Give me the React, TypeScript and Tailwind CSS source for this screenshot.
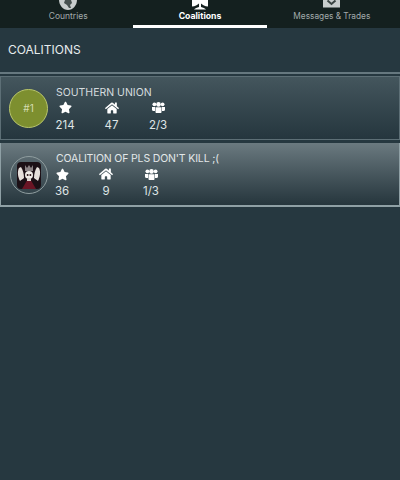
import { FaStar, FaHome } from "react-icons/fa";

const font = { fontFamily: '"Inter", "Open Sans", sans-serif' };

// top of the tab icons runs off the screen, so only the visible part is drawn
function GlobeTop() {
  return (
    <svg width="18" height="10" viewBox="0 0 18 10" className="block">
      <path d="M0 0h18c0 5-4 10-9 10S0 5 0 0z" fill="#c8cdcd" />
      <path d="M6 0h6l1 3-2 2 1 3-2 0-2-3-3-2z" fill="#46504f" />
    </svg>
  );
}

function CrestTop() {
  return (
    <svg width="16" height="10" viewBox="0 0 16 10" className="block">
      <path
        d="M0 0H16V6.500C13 6.500 10.500 5 9 3.500V7C11 7.500 13 8.200 14 9.500H2C3 8.200 5 7.500 7 7V3.500C5.500 5 3 6.500 0 6.500Z"
        fill="#ffffff"
      />
    </svg>
  );
}

function EnvelopeTop() {
  return (
    <svg width="17" height="8" viewBox="0 0 17 8" className="block">
      <rect width="17" height="7.500" fill="#c8cdcd" />
      <path d="M4.500 0.500 8.500 4 12.500 0.500" fill="none" stroke="#3a4443" strokeWidth="2" />
    </svg>
  );
}

function UsersIcon() {
  return (
    <svg width="13" height="11" viewBox="0 0 13 11" fill="#ffffff">
      <circle cx="2.400" cy="2.300" r="1.900" />
      <circle cx="10.600" cy="2.300" r="1.900" />
      <circle cx="6.500" cy="2.400" r="2.300" />
      <path d="M0 5h3v4H1.200C.5 9 0 8.500 0 7.800z" />
      <path d="M13 5h-3v4h1.800c.7 0 1.200-.5 1.200-1.200z" />
      <path d="M3.500 5.200h6V10c0 .6-.4 1-1 1h-4c-.6 0-1-.4-1-1z" />
    </svg>
  );
}

function SkullBadge() {
  return (
    <div className="flex h-[38px] w-[38px] items-center justify-center rounded-full border-[1.5px] border-[#8f9d9f]">
      <svg width="24" height="27" viewBox="0 0 24 27" className="rounded-[4px]">
        <rect width="24" height="27" fill="#1c1016" />
        <path d="M5 27 L12 15 L19 27 Z" fill="#6a1525" />
        <path d="M2 6C0 10 1 15 3 19c1-1 3-2 4-3 0-4-1-8-3-11z" fill="#e6dfdb" />
        <path d="M22 6c2 4 1 9-1 13-1-1-3-2-4-3 0-4 1-8 3-11z" fill="#e6dfdb" />
        <path d="M8 3l2 3 2-3 2 3 2-3v6H8z" fill="#8b8285" />
        <circle cx="12" cy="13" r="4" fill="#efeae6" />
        <rect x="10" y="16" width="4" height="3" fill="#d8d0cc" />
        <circle cx="10.600" cy="13" r="1" fill="#2a1015" />
        <circle cx="13.400" cy="13" r="1" fill="#2a1015" />
      </svg>
    </div>
  );
}

function Stat({ icon, value, width }: { icon: React.ReactNode; value: string; width: string }) {
  return (
    <div className={`flex flex-col items-center ${width}`}>
      <div className="flex h-[14px] items-center text-white">{icon}</div>
      <div className="mt-[3px] text-[11.5px] leading-[14px] text-[#dfe5e6]">{value}</div>
    </div>
  );
}

export default function App() {
  return (
    <div style={font} className="flex h-[480px] w-[400px] flex-col overflow-hidden bg-[#263840]">
      <nav className="grid h-[28px] shrink-0 grid-cols-3 bg-[#14201f]">
        <div className="flex h-[28px] flex-col items-center pl-[3px]">
          <GlobeTop />
          <div className="mt-[1px] text-[8.5px] leading-[11px] text-[#a3abac]">Countries</div>
        </div>
        <div className="flex h-[28px] flex-col items-center border-b-[3px] border-white">
          <CrestTop />
          <div className="mt-[1px] text-[8.7px] font-bold leading-[11px] text-white">Coalitions</div>
        </div>
        <div className="flex h-[28px] flex-col items-center pr-[3px]">
          <EnvelopeTop />
          <div className="mt-[3px] text-[8.300px] leading-[11px] text-[#a3abac]">Messages &amp; Trades</div>
        </div>
      </nav>

      <header className="flex h-[46px] shrink-0 items-center border-b-[2px] border-[#66787f] pl-[8px] text-[12px] text-[#e6ecee]">
        COALITIONS
      </header>

      <div className="mt-[2px] flex h-[64px] items-center border border-[#5d6f76] bg-gradient-to-b from-[#44565d] to-[#25363e] pt-[1px]">
        <div className="ml-[8px] flex h-[39px] w-[39px] items-center justify-center rounded-full border border-[#b9c66b] bg-[#7d8f2f] text-[10px] text-[#d5dcb0]">
          #1
        </div>
        <div className="ml-[8px] flex flex-col">
          <div className="text-[10.500px] leading-[14px] text-[#d5dcdf]">SOUTHERN UNION</div>
          <div className="mt-[1px] flex">
            <Stat icon={<FaStar size={13} />} value="214" width="w-[18px]" />
            <div className="w-[28.500px]" />
            <Stat icon={<FaHome size={14} />} value="47" width="w-[18px]" />
            <div className="w-[28.500px]" />
            <Stat icon={<UsersIcon />} value="2/3" width="w-[18px]" />
          </div>
        </div>
      </div>

      <div className="mt-[3px] flex h-[64px] items-center border-x border-b-2 border-[#8fa0a5] bg-gradient-to-b from-[#6b7a80] to-[#26363d] pt-[2px]">
        <div className="ml-[9px]">
          <SkullBadge />
        </div>
        <div className="ml-[8px] flex flex-col">
          <div className="text-[10.500px] leading-[14px] tracking-[-0.15px] text-[#e2e7e9]">COALITION OF PLS DON'T KILL ;(</div>
          <div className="-ml-[1px] mt-[1px] flex">
            <Stat icon={<FaStar size={13} />} value="36" width="w-[14px]" />
            <div className="w-[30px]" />
            <Stat icon={<FaHome size={14} />} value="9" width="w-[14px]" />
            <div className="w-[31px]" />
            <Stat icon={<UsersIcon />} value="1/3" width="w-[14px]" />
          </div>
        </div>
      </div>
    </div>
  );
}
